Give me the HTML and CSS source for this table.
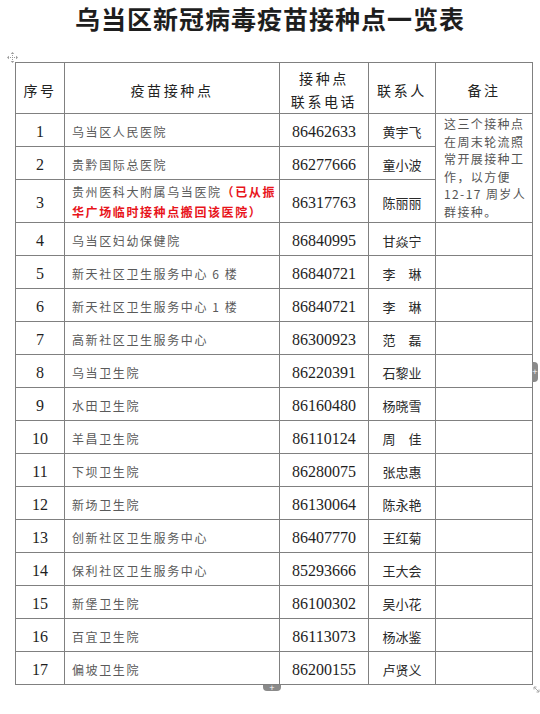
FILE: index.html
```html
<!DOCTYPE html>
<html lang="zh-CN">
<head>
<meta charset="utf-8">
<title>乌当区新冠病毒疫苗接种点一览表</title>
<link rel="stylesheet" href="styles.css">
</head>
<body>
<div class="page">
  <h1 class="title">乌当区新冠病毒疫苗接种点一览表</h1>
  <div class="table-wrap">
    <span class="move-handle">
      <svg width="11" height="11" viewBox="0 0 11 11">
        <g fill="none" stroke="#9a9a9a" stroke-width="1" stroke-dasharray="1 1">
          <path d="M5.5 1 V10 M1 5.5 H10"/>
        </g>
        <g fill="#9a9a9a">
          <path d="M5.5 0 L3.8 2 H7.2Z M5.5 11 L3.8 9 H7.2Z M0 5.5 L2 3.8 V7.2Z M11 5.5 L9 3.8 V7.2Z"/>
        </g>
      </svg>
    </span>
    <table class="sheet">
      <colgroup>
        <col class="c-no">
        <col class="c-place">
        <col class="c-tel">
        <col class="c-name">
        <col class="c-note">
      </colgroup>
      <thead>
        <tr class="head-row">
          <th class="h-no">序号</th>
          <th class="h-place">疫苗接种点</th>
          <th class="h-tel">接种点<br>联系电话</th>
          <th class="h-name">联系人</th>
          <th class="h-note">备注</th>
        </tr>
      </thead>
      <tbody>
        <tr>
          <td class="no">1</td>
          <td class="place">乌当区人民医院</td>
          <td class="tel">86462633</td>
          <td class="name">黄宇飞</td>
          <td class="note" rowspan="3">这三个接种点<br>在周末轮流照<br>常开展接种工<br>作，以方便<br>12-17 周岁人<br>群接种。</td>
        </tr>
        <tr>
          <td class="no">2</td>
          <td class="place">贵黔国际总医院</td>
          <td class="tel">86277666</td>
          <td class="name">童小波</td>
        </tr>
        <tr class="tall">
          <td class="no">3</td>
          <td class="place two-line">贵州医科大附属乌当医院<span class="red">（已从振</span><br><span class="red">华广场临时接种点搬回该医院）</span></td>
          <td class="tel">86317763</td>
          <td class="name">陈丽丽</td>
        </tr>
        <tr>
          <td class="no">4</td>
          <td class="place">乌当区妇幼保健院</td>
          <td class="tel">86840995</td>
          <td class="name">甘焱宁</td>
          <td class="note"></td>
        </tr>
        <tr>
          <td class="no">5</td>
          <td class="place">新天社区卫生服务中心 6 楼</td>
          <td class="tel">86840721</td>
          <td class="name">李　琳</td>
          <td class="note"></td>
        </tr>
        <tr>
          <td class="no">6</td>
          <td class="place">新天社区卫生服务中心 1 楼</td>
          <td class="tel">86840721</td>
          <td class="name">李　琳</td>
          <td class="note"></td>
        </tr>
        <tr>
          <td class="no">7</td>
          <td class="place">高新社区卫生服务中心</td>
          <td class="tel">86300923</td>
          <td class="name">范　磊</td>
          <td class="note"></td>
        </tr>
        <tr>
          <td class="no">8</td>
          <td class="place">乌当卫生院</td>
          <td class="tel">86220391</td>
          <td class="name">石黎业</td>
          <td class="note"></td>
        </tr>
        <tr>
          <td class="no">9</td>
          <td class="place">水田卫生院</td>
          <td class="tel">86160480</td>
          <td class="name">杨晓雪</td>
          <td class="note"></td>
        </tr>
        <tr>
          <td class="no">10</td>
          <td class="place">羊昌卫生院</td>
          <td class="tel">86110124</td>
          <td class="name">周　佳</td>
          <td class="note"></td>
        </tr>
        <tr>
          <td class="no">11</td>
          <td class="place">下坝卫生院</td>
          <td class="tel">86280075</td>
          <td class="name">张忠惠</td>
          <td class="note"></td>
        </tr>
        <tr>
          <td class="no">12</td>
          <td class="place">新场卫生院</td>
          <td class="tel">86130064</td>
          <td class="name">陈永艳</td>
          <td class="note"></td>
        </tr>
        <tr>
          <td class="no">13</td>
          <td class="place">创新社区卫生服务中心</td>
          <td class="tel">86407770</td>
          <td class="name">王红菊</td>
          <td class="note"></td>
        </tr>
        <tr>
          <td class="no">14</td>
          <td class="place">保利社区卫生服务中心</td>
          <td class="tel">85293666</td>
          <td class="name">王大会</td>
          <td class="note"></td>
        </tr>
        <tr>
          <td class="no">15</td>
          <td class="place">新堡卫生院</td>
          <td class="tel">86100302</td>
          <td class="name">吴小花</td>
          <td class="note"></td>
        </tr>
        <tr>
          <td class="no">16</td>
          <td class="place">百宜卫生院</td>
          <td class="tel">86113073</td>
          <td class="name">杨冰鉴</td>
          <td class="note"></td>
        </tr>
        <tr>
          <td class="no">17</td>
          <td class="place">偏坡卫生院</td>
          <td class="tel">86200155</td>
          <td class="name">卢贤义</td>
          <td class="note"></td>
        </tr>
      </tbody>
    </table>
    <span class="tab-bottom">+</span>
    <span class="tab-right">+</span>
    <span class="resize-handle">
      <svg width="7" height="7" viewBox="0 0 7 7">
        <path d="M1 1 L6 6 M1 1 H3.5 M1 1 V3.5 M6 6 H3.5 M6 6 V3.5" fill="none" stroke="#a8a8a8" stroke-width="1"/>
      </svg>
    </span>
  </div>
</div>
</body>
</html>
```

FILE: styles.css
```css
html, body {
  margin: 0;
  padding: 0;
  background: #ffffff;
}

.page {
  width: 540px;
  height: 714px;
  overflow: hidden;
  font-family: "Noto Sans CJK SC", "Liberation Serif", sans-serif;
}

.title {
  margin: 0;
  height: 37px;
  line-height: 37px;
  text-align: center;
  font-family: "Noto Sans CJK SC", sans-serif;
  font-size: 25px;
  font-weight: 700;
  letter-spacing: 1px;
  color: #1e1e1e;
}

.table-wrap {
  position: relative;
  margin-top: 25px;
  margin-left: 15px;
  width: 517px;
}

.sheet {
  width: 517px;
  table-layout: fixed;
  border-collapse: collapse;
  border: 1px solid #707070;
}

.c-no { width: 49px; }
.c-place { width: 215px; }
.c-tel { width: 89px; }
.c-name { width: 67px; }
.c-note { width: 97px; }

.sheet th,
.sheet td {
  border: 1px solid #808080;
  padding: 0;
  vertical-align: middle;
}

.head-row {
  height: 51px;
}

.sheet th {
  font-family: "Noto Sans CJK SC", sans-serif;
  font-weight: 400;
  font-size: 14px;
  line-height: 23px;
  letter-spacing: 2.6px;
  color: #222;
  text-align: center;
  padding-top: 4px;
}

.sheet tbody tr {
  height: 33px;
}

.sheet tbody tr.tall {
  height: 43px;
}

.no {
  text-align: center;
  font-family: "Liberation Serif", serif;
  font-size: 16px;
  color: #1e1e1e;
  padding-top: 3px !important;
}

.tel {
  text-align: center;
  font-family: "Liberation Serif", serif;
  font-size: 16px;
  color: #1e1e1e;
  padding-top: 3px !important;
}

.place {
  padding-left: 7px !important;
  font-size: 12px;
  letter-spacing: 1.6px;
  color: #5a5a5a;
  white-space: nowrap;
  padding-top: 3px !important;
}

.place.two-line {
  line-height: 20px;
  padding-top: 1px !important;
}

.red {
  color: #e8141b;
  font-weight: 700;
}

.name {
  text-align: center;
  font-size: 13px;
  color: #2a2a2a;
  padding-top: 3px !important;
}

.note {
  vertical-align: top !important;
  padding: 1px 0 0 8px !important;
  font-size: 12px;
  line-height: 17.5px;
  letter-spacing: 1.4px;
  color: #555;
  white-space: nowrap;
}

.move-handle {
  position: absolute;
  left: -8px;
  top: -10px;
  width: 11px;
  height: 11px;
  line-height: 0;
}

.tab-bottom {
  position: absolute;
  left: 248px;
  bottom: -6px;
  width: 18px;
  height: 6px;
  background: #8a8a8a;
  border-radius: 0 0 4px 4px;
  color: #fff;
  font-family: "DejaVu Sans", sans-serif;
  font-size: 7px;
  line-height: 6px;
  text-align: center;
}

.tab-right {
  position: absolute;
  right: -6px;
  top: 300px;
  width: 6px;
  height: 20px;
  background: #8a8a8a;
  border-radius: 0 4px 4px 0;
  color: #fff;
  font-family: "DejaVu Sans", sans-serif;
  font-size: 7px;
  line-height: 20px;
  text-align: center;
}

.resize-handle {
  position: absolute;
  right: -8px;
  bottom: -8px;
  width: 7px;
  height: 7px;
  line-height: 0;
}
```
